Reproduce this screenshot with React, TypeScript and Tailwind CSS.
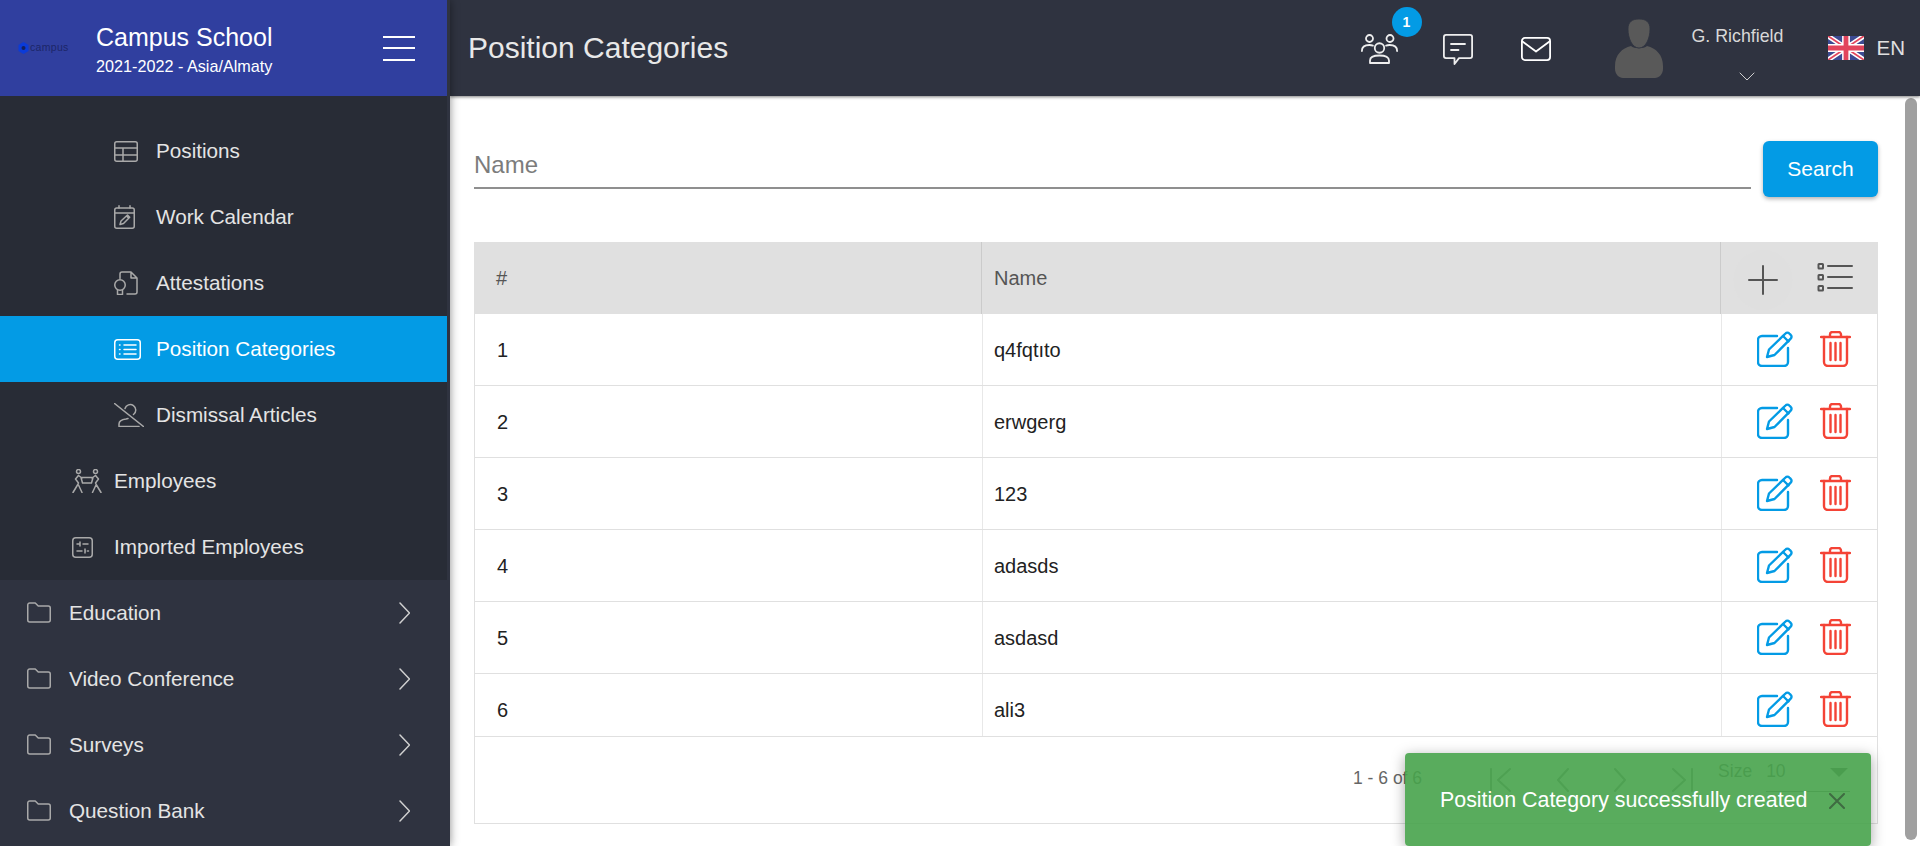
import type { ReactNode } from 'react'

const rows = [
  { id: 1, name: 'q4fqtıto' },
  { id: 2, name: 'erwgerg' },
  { id: 3, name: '123' },
  { id: 4, name: 'adasds' },
  { id: 5, name: 'asdasd' },
  { id: 6, name: 'ali3' },
]

function Ic({ w, h, children, className = '' }: { w: number; h: number; children: ReactNode; className?: string }) {
  return (
    <svg
      width={w}
      height={h}
      viewBox={`0 0 ${w} ${h}`}
      fill="none"
      stroke="currentColor"
      strokeWidth={1.5}
      strokeLinecap="round"
      strokeLinejoin="round"
      className={`shrink-0 ${className}`}
    >
      {children}
    </svg>
  )
}

const TableIcon = () => (
  <Ic w={24} h={21}>
    <rect x=".75" y=".75" width="22.5" height="19.5" rx="2" />
    <path d="M1 7h22M1 14h22M9 7v13" />
  </Ic>
)
const CalendarIcon = () => (
  <Ic w={21} h={24}>
    <rect x=".75" y="3" width="19.5" height="20.25" rx="2" />
    <path d="M1 8h19M5 .75V3M16 .75V3" />
    <path d="M6 19.5l1-3.5 6.5-6 2.2 2.2-6.2 6.3zM12.5 11l2 2" />
  </Ic>
)
const AttestIcon = () => (
  <Ic w={24} h={24}>
    <path d="M6 7.5V3a2 2 0 0 1 2-2h9l6 6v14a2 2 0 0 1-2 2h-8M17 1v6h6" />
    <circle cx="6" cy="14" r="5.25" />
    <path d="M3.5 19v4.5h5V19" />
  </Ic>
)
const ListBoxIcon = () => (
  <Ic w={27} h={21}>
    <rect x=".75" y=".75" width="25.5" height="19.5" rx="3" />
    <path d="M10 6h12M10 10.5h12M10 15h12M5.5 6h.5M5.5 10.5h.5M5.5 15h.5" />
  </Ic>
)
const UserOffIcon = () => (
  <Ic w={30} h={24}>
    <path d="M.5 .5l29 23" />
    <path d="M11 5.5A5.5 5.5 0 1 1 19.5 11.5M5 23.5v-2.5c0-2.5 3-4.5 7-5l2-.5M5 23.5h20" />
  </Ic>
)
const TeamIcon = () => (
  <Ic w={30} h={24}>
    <circle cx="6.5" cy="2.5" r="2" />
    <circle cx="23.5" cy="2.5" r="2" />
    <path d="M6.5 6.5L3.5 10l3 4-1 2L1 23.5M6.5 16l3.5 7.5M23.5 6.5l3 3.5-3 4 1 2L29 23.5M24 16l-3.5 7.5" />
    <path d="M9 8.5l1.5 5.5h9L21 8.5zM6.5 6.5L10 9M23.5 6.5L20 9" />
  </Ic>
)
const SlidersIcon = () => (
  <Ic w={21} h={21}>
    <rect x=".75" y=".75" width="19.5" height="19.5" rx="3" />
    <path d="M5 7h2.5M11 7h5M8 5v4M5 14h5M13 12v4M13 14h.5M15.5 14h1" />
  </Ic>
)
const FolderIcon = () => (
  <Ic w={24} h={21}>
    <path d="M.75 3a2 2 0 0 1 2-2h5.5l3 3h10a2 2 0 0 1 2 2v12a2 2 0 0 1-2 2h-18.5a2 2 0 0 1-2-2z" />
  </Ic>
)

const subItems = [
  { label: 'Positions', icon: <TableIcon /> },
  { label: 'Work Calendar', icon: <CalendarIcon /> },
  { label: 'Attestations', icon: <AttestIcon /> },
  { label: 'Position Categories', icon: <ListBoxIcon />, active: true },
  { label: 'Dismissal Articles', icon: <UserOffIcon /> },
]
const staffItems = [
  { label: 'Employees', icon: <TeamIcon /> },
  { label: 'Imported Employees', icon: <SlidersIcon /> },
]
const groups = ['Education', 'Video Conference', 'Surveys', 'Question Bank']

function NavRow({ label, icon, active, indent }: { label: string; icon: ReactNode; active?: boolean; indent: string }) {
  return (
    <div className={`flex h-[66px] items-center ${indent} ${active ? 'bg-[#039be5] text-white' : 'text-[#e4e4e4]'}`}>
      <span className={`flex w-[42px] shrink-0 ${active ? 'text-white' : 'text-[#a9a9a9]'}`}>{icon}</span>
      <span>{label}</span>
    </div>
  )
}

function Sidebar() {
  return (
    <aside className="relative z-20 flex h-full w-[450px] shrink-0 flex-col overflow-hidden bg-[#2f3340] pr-[3px] text-[20.7px] shadow-[0_0_9px_rgba(0,0,0,0.45)]">
      <div className="flex h-[96px] shrink-0 items-center bg-[#303f9f] text-white">
        <div className="flex w-[96px] shrink-0 items-center pl-[18px]">
          <svg width="11" height="12" viewBox="0 0 11 12" className="shrink-0">
            <path d="M5.5 0l5 3v6l-5 3-5-3V3z" fill="#0b3bd8" />
            <circle cx="5.5" cy="6" r="2" fill="#14205e" />
          </svg>
          <span className="ml-[1px] text-[10.5px] tracking-[0.3px] text-[#1c2668]">campus</span>
        </div>
        <div className="mt-[2px] flex-1">
          <div className="text-[25px] leading-[30px]">Campus School</div>
          <div className="mt-[3px] text-[16.2px] leading-[22px]">2021-2022 - Asia/Almaty</div>
        </div>
        <div className="mr-[32px] flex w-[32px] flex-col gap-[9.5px]">
          <span className="h-[2px] bg-white" />
          <span className="h-[2px] bg-white" />
          <span className="h-[2px] bg-white" />
        </div>
      </div>

      <div className="bg-[#282c36] pt-[22px]">
        {subItems.map((item) => (
          <NavRow key={item.label} {...item} indent="pl-[114px]" />
        ))}
        {staffItems.map((item) => (
          <NavRow key={item.label} {...item} indent="pl-[72px]" />
        ))}
      </div>

      {groups.map((g) => (
        <div key={g} className="flex h-[66px] shrink-0 items-center justify-between pl-[27px] pr-[37px] text-[#e4e4e4]">
          <div className="flex items-center">
            <span className="flex w-[42px] text-[#a9a9a9]"><FolderIcon /></span>
            <span>{g}</span>
          </div>
          <Ic w={11} h={22} className="text-[#d0d0d0]">
            <path d="M1 1l9.5 10L1 21" />
          </Ic>
        </div>
      ))}
    </aside>
  )
}

function Topbar() {
  return (
    <header className="relative z-10 flex h-[96px] shrink-0 items-center bg-[#2f3340] pl-[18px] shadow-[0_1px_3px_rgba(0,0,0,0.5)]">
      <h1 className="mb-[2px] flex-1 text-[30px] font-normal text-[#e8e8e8]">Position Categories</h1>

      <div className="relative mr-[45px] mt-[2px] text-[#eeeeee]">
        <Ic w={37} h={30}>
          <g strokeWidth={1.8}>
            <circle cx="18.5" cy="14" r="4.75" />
            <path d="M9 29v-2.5c0-3 3-5 9.5-5s9.5 2 9.5 5V29z" />
            <circle cx="8.5" cy="4.5" r="3.5" />
            <circle cx="29" cy="4.5" r="3.5" />
            <path d="M.9 17c0-4 2.5-6 7.5-6 1.5 0 2.5.2 3.5.6M36.1 17c0-4-2.5-6-7.5-6-1.5 0-2.5.2-3.5.6" />
          </g>
        </Ic>
        <span className="absolute -right-[24px] -top-[27px] flex h-[30px] w-[30px] items-center justify-center rounded-full bg-[#039be5] text-[14px] font-bold text-white">
          1
        </span>
      </div>

      <span className="mr-[48px] mt-[2px] text-[#eeeeee]">
        <Ic w={30} h={31}>
          <g strokeWidth={1.8}>
            <path d="M3 .9h24a2.1 2.1 0 0 1 2.1 2.1v19a2.1 2.1 0 0 1-2.1 2.1H16L11.5 30v-5.9H3A2.1 2.1 0 0 1 .9 22V3A2.1 2.1 0 0 1 3 .9z" />
            <path d="M8 10h14M8 16h7.5" />
          </g>
        </Ic>
      </span>

      <span className="mr-[64px] mt-[1px] text-white">
        <Ic w={30} h={24}>
          <rect x=".9" y=".9" width="28.2" height="22.2" rx="3" strokeWidth={1.8} />
          <path d="M1.5 4.5L15 14.5l13.5-10" strokeWidth={1.8} />
        </Ic>
      </span>

      <svg width="48" height="60" viewBox="0 0 48 60" className="mr-[29px] mt-[1px] shrink-0">
        <path d="M16 27c3 3 13 3 16 0 9 2 16 9 16 20v3c0 5-4 9-8 9H8c-4 0-8-4-8-9v-3c0-11 7-18 16-20z" fill="#595959" />
        <path d="M13 10C13 3 17 0 24 0s11 3 11 10c0 9-4 19-11 19S13 19 13 10z" fill="#595959" stroke="#2f3340" strokeWidth=".8" />
      </svg>

      <div className="mr-[26px] mt-[6px] flex h-[72px] w-[110px] flex-col justify-between whitespace-nowrap pt-[8px] text-[17.8px] text-[#d8d8d8]">
        <span>G. Richfield</span>
        <Ic w={16} h={9} className="mb-[6px] self-center text-[#cfcfcf]">
          <path d="M1 1l7 7 7-7" strokeWidth={1} />
        </Ic>
      </div>

      <svg width="36" height="24" viewBox="0 0 60 40" className="mr-[13px] shrink-0">
        <rect width="60" height="40" fill="#3c4a92" />
        <path d="M0 0l60 40M60 0L0 40" stroke="#fff" strokeWidth="8" />
        <path d="M0 0l60 40M60 0L0 40" stroke="#e2445c" strokeWidth="3" />
        <path d="M30 0v40M0 20h60" stroke="#fff" strokeWidth="13" />
        <path d="M30 0v40M0 20h60" stroke="#e2445c" strokeWidth="8" />
      </svg>
      <span className="mr-[15px] text-[20.5px] text-[#e0e0e0]">EN</span>
    </header>
  )
}

const EditIcon = () => (
  <Ic w={36} h={36} className="text-[#039be5]">
    <path d="M20 5H5a4 4 0 0 0-4 4v22a4 4 0 0 0 4 4h22a4 4 0 0 0 4-4V17" strokeWidth={2.4} />
    <path d="M10 26l2-7.5L28.5 2.5a2.6 2.6 0 0 1 3.8 0l1.4 1.4a2.6 2.6 0 0 1 0 3.8L17.5 24z" strokeWidth={2.4} />
    <path d="M26 5l5.5 5.5" strokeWidth={2.4} />
  </Ic>
)
const TrashIcon = () => (
  <Ic w={31} h={36} className="text-[#f44336]">
    <path d="M1 6h29M10 6V3.5A2.5 2.5 0 0 1 12.5 1h6A2.5 2.5 0 0 1 21 3.5V6" strokeWidth={2.4} />
    <path d="M4 6v25a4 4 0 0 0 4 4h15a4 4 0 0 0 4-4V6M10.5 12v17M15.5 12v17M20.5 12v17" strokeWidth={2.4} />
  </Ic>
)

function DataTable() {
  const cols = 'grid grid-cols-[507px_739px_1fr]'
  return (
    <div className="mt-[45px] border-b border-[#e0e0e0]">
      <div className={`${cols} h-[72px] items-stretch bg-[#e0e0e0] text-[20px] text-[#555]`}>
        <div className="flex items-center pl-[22px]">#</div>
        <div className="flex items-center border-l border-[#cbcbcb] pl-[12px]">Name</div>
        <div className="flex items-center border-l border-[#cbcbcb] text-[#555]">
          <span className="ml-[12px] mt-[4px] flex h-[60px] w-[60px] items-center justify-center rounded-full bg-[#dfdfdf]">
            <Ic w={30} h={30}>
              <path d="M15 1v28M1 15h28" strokeWidth={2} />
            </Ic>
          </span>
          <span className="ml-[24px] mb-[2px]">
            <Ic w={36} h={30}>
              <path d="M11 4h24M11 15h24M11 26h24" strokeWidth={2} />
              <rect x="1.5" y="2" width="4.5" height="4.5" strokeWidth={2} rx=".5" />
              <rect x="1.5" y="13" width="4.5" height="4.5" strokeWidth={2} rx=".5" />
              <rect x="1.5" y="24" width="4.5" height="4.5" strokeWidth={2} rx=".5" />
            </Ic>
          </span>
        </div>
      </div>

      <div className="h-[422px] overflow-hidden border-x border-[#e0e0e0]">
        {rows.map((r) => (
          <div key={r.id} className={`${cols} h-[72px] border-b border-[#e0e0e0] text-[20px] text-[#222]`}>
            <div className="flex items-center pl-[22px]">{r.id}</div>
            <div className="flex items-center border-l border-[#e8e8e8] pl-[11px]">{r.name}</div>
            <div className="flex items-center border-l border-[#e8e8e8] pb-[2px] pl-[35px]">
              <EditIcon />
              <span className="ml-[27px]">
                <TrashIcon />
              </span>
            </div>
          </div>
        ))}
      </div>

      <div className="flex h-[87px] items-start border-x border-t border-[#e0e0e0] text-[#666]">
        <span className="ml-[878px] mt-[31px] text-[17.5px] leading-[20px]">1 - 6 of 6</span>
        <div className="ml-[67px] mt-[31px] flex items-center gap-[43px] text-[#8a8a8a]">
          <Ic w={24} h={24}>
            <path d="M2 1v22M21 1L9 12l12 11" strokeWidth={2} />
          </Ic>
          <Ic w={14} h={24}>
            <path d="M12 1L2 12l10 11" strokeWidth={2} />
          </Ic>
          <Ic w={14} h={24}>
            <path d="M2 1l10 11L2 23" strokeWidth={2} />
          </Ic>
          <Ic w={24} h={24}>
            <path d="M22 1v22M3 1l12 11L3 23" strokeWidth={2} />
          </Ic>
        </div>
        <span className="ml-[24px] mt-[24px] text-[17.5px] leading-[20px]">Size</span>
        <div className="ml-[14px] mt-[24px] flex h-[31px] w-[84px] justify-between border-b border-[#888] pr-[2px] text-[17.5px] leading-[20px]">
          <span>10</span>
          <span className="mt-[7px] h-0 w-0 border-x-[9px] border-t-[9px] border-x-transparent border-t-[#666]" />
        </div>
      </div>
    </div>
  )
}

export default function App() {
  return (
    <div className="relative flex h-[846px] w-[1920px] overflow-hidden bg-white font-['Liberation_Sans',Arial,sans-serif]">
      <Sidebar />
      <div className="flex h-full min-w-0 flex-1 flex-col">
        <Topbar />
        <div className="flex min-h-0 flex-1">
          <main className="min-w-0 flex-1 pl-[24px] pr-[27px] pt-[45px]">
            <div className="flex items-start gap-[12px]">
              <input
                placeholder="Name"
                className="h-[48px] flex-1 border-b-2 border-[#8f8f8f] pt-[2px] text-[24px] text-[#333] outline-none placeholder:text-[#7c7c7c]"
              />
              <button className="h-[56px] w-[115px] rounded-[6px] bg-[#039be5] text-[21px] text-white shadow-[0_2px_4px_rgba(0,0,0,0.3)]">
                Search
              </button>
            </div>
            <DataTable />
          </main>
          <div className="w-[15px] shrink-0 pr-[3px] pt-[2px]">
            <div className="h-[742px] rounded-full bg-[#a0a0a0]" />
          </div>
        </div>
      </div>

      <div className="absolute bottom-0 right-[49px] z-30 flex h-[93px] w-[466px] items-center justify-between rounded-[4px] bg-[#47a34b]/90 pl-[35px] pr-[26px] pt-[2px] text-[21.4px] text-white shadow-[0_3px_14px_rgba(0,0,0,0.35)]">
        <span>Position Category successfully created</span>
        <Ic w={16} h={16} className="text-[#3f6b42]">
          <path d="M1 1l14 14M15 1L1 15" strokeWidth={2} />
        </Ic>
      </div>
    </div>
  )
}
